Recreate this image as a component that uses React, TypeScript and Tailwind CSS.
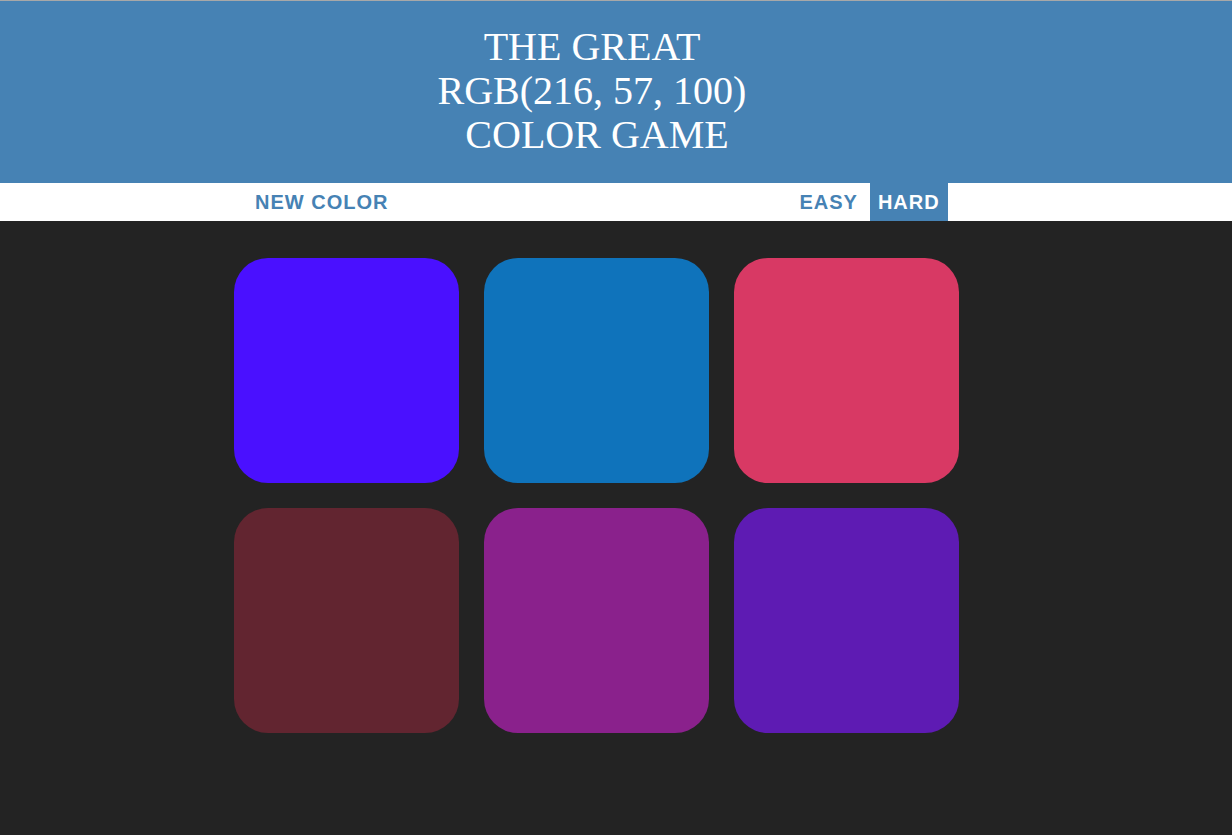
import React, { useState } from 'react';

const COLORS = ['#4a10ff', '#0f73bb', '#d83964', '#622530', '#8a218c', '#5e1bb3'];

const App: React.FC = () => {
  const [mode, setMode] = useState<'easy' | 'hard'>('hard');

  return (
    <div className="min-h-[835px] bg-[#232323] font-['Liberation_Sans',Arial,sans-serif]">
      <h1 className="border-t border-[#a8a8a8] bg-[#4682b4] pt-[24px] pb-[26px] text-white">
        <div className="w-[1184px] text-center font-['Liberation_Serif','Times_New_Roman',serif] text-[40px] leading-[44px] font-normal uppercase">
          The Great
          <br />
          <span>RGB(216, 57, 100)</span>
          <br />
          {'\u00a0'}Color Game
        </div>
      </h1>

      <div className="flex h-[38px] items-stretch gap-1 bg-white text-[20px] font-bold uppercase tracking-[1px] text-[#4682b4]">
        <button className="ml-[247px] px-2 uppercase">New Color</button>
        <span className="w-[387px]" />
        <button
          onClick={() => setMode('easy')}
          className={mode === 'easy' ? 'px-2 uppercase bg-[#4682b4] text-white' : 'px-2 uppercase'}
        >
          Easy
        </button>
        <button
          onClick={() => setMode('hard')}
          className={mode === 'hard' ? 'px-2 uppercase bg-[#4682b4] text-white' : 'px-2 uppercase'}
        >
          Hard
        </button>
      </div>

      <div className="ml-[234px] mt-[37px] grid w-[725px] grid-cols-3 gap-[25px]">
        {COLORS.map((c) => (
          <div key={c} className="h-[225px] w-[225px] rounded-[34px]" style={{ backgroundColor: c }} />
        ))}
      </div>
    </div>
  );
};

export default App;
